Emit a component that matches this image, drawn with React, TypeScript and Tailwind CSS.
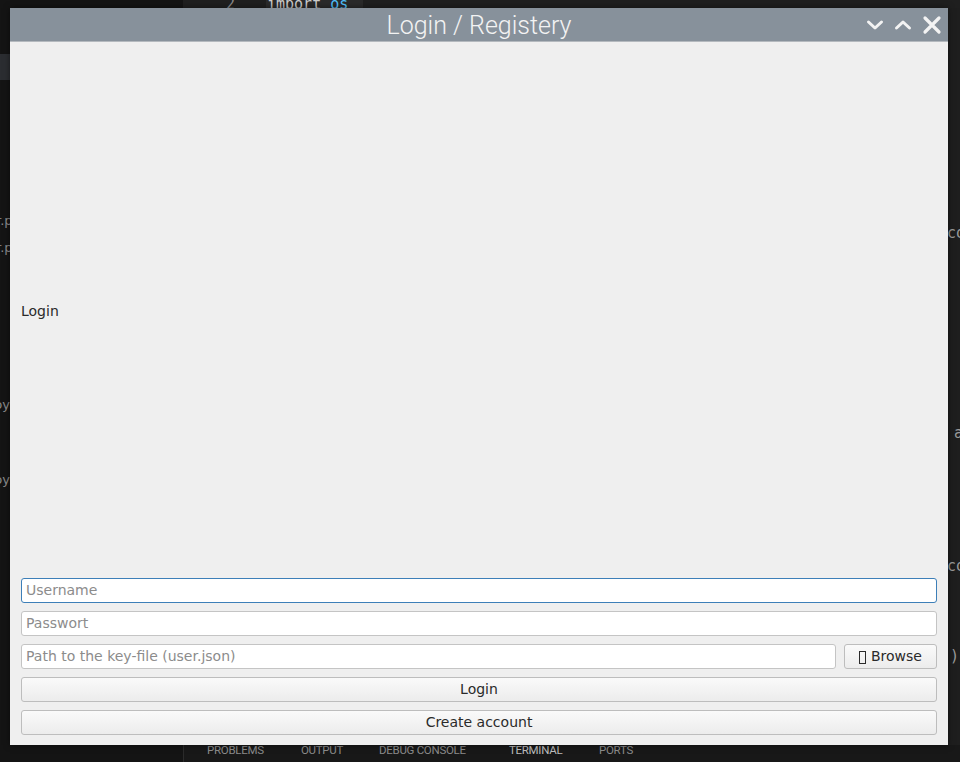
import React from "react";

const qt = { fontFamily: '"DejaVu Sans", "Liberation Sans", sans-serif' };
const mono = { fontFamily: '"DejaVu Sans Mono", "Liberation Mono", monospace' };

function Field({ placeholder, focused = false }: { placeholder: string; focused?: boolean }) {
  return (
    <div
      className={
        "h-[25px] flex items-center rounded-[3px] bg-white px-[4px] text-[14px] text-[#8c8c8c] border " +
        (focused ? "border-[#3d7fb8]" : "border-[#c4c4c4]")
      }
    >
      {placeholder}
    </div>
  );
}

function QButton({ children, className = "" }: { children: React.ReactNode; className?: string }) {
  return (
    <div
      className={
        "h-[25px] flex items-center justify-center rounded-[3px] border border-[#bdbdbd] bg-gradient-to-b from-[#fafafa] to-[#ececec] text-[14px] text-[#2a2a2a] " +
        className
      }
    >
      {children}
    </div>
  );
}

export default function App() {
  return (
    <div className="relative w-[960px] h-[762px] overflow-hidden bg-[#141414]" style={qt}>
      {/* background desktop (editor behind) */}
      <div className="absolute left-[183px] top-0 right-0 h-[8px] bg-[#1f1f1f]" />
      <div className="absolute left-[266px] top-0 w-[97px] h-[8px] bg-[#2a2a2a]" />
      <div className="absolute left-[226px] top-[-7px] text-[15px] text-[#8a8a8a]" style={mono}>2</div>
      <div className="absolute left-[267px] top-[-7px] text-[15px] text-[#cccccc] whitespace-pre" style={mono}>
        import <span className="text-[#4fc1ff]">os</span>
      </div>
      <div className="absolute left-0 top-[54px] w-[10px] h-[26px] bg-[#2b2d31]" />
      <div className="absolute left-[-4px] top-[211px] text-[13px] text-[#8a8a8a]">r.p</div>
      <div className="absolute left-[-4px] top-[238px] text-[13px] text-[#8a8a8a]">r.p</div>
      <div className="absolute left-[-6px] top-[395px] text-[13px] text-[#8a8a8a]">py</div>
      <div className="absolute left-[-6px] top-[470px] text-[13px] text-[#8a8a8a]">py</div>
      <div className="absolute left-[948px] top-[8px] w-[12px] h-[737px] bg-[#1e1e1e]" />
      <div className="absolute left-[947px] top-[222px] text-[15px] text-[#9a9a9a]" style={mono}>co</div>
      <div className="absolute left-[954px] top-[422px] text-[15px] text-[#9a9a9a]" style={mono}>a</div>
      <div className="absolute left-[947px] top-[555px] text-[15px] text-[#9a9a9a]" style={mono}>co</div>
      <div className="absolute left-[950px] top-[645px] text-[15px] text-[#9a9a9a]" style={mono}>)</div>
      <div className="absolute left-[183px] top-[745px] right-0 bottom-0 bg-[#181818] border-l border-[#2b2b2b]" />
      <div
        className="absolute left-[207px] top-[742px] flex text-[11.5px] tracking-tight text-[#8b8b8b]"
        style={{ fontFamily: "Roboto, sans-serif" }}
      >
        <span className="w-[94px]">PROBLEMS</span>
        <span className="w-[78px]">OUTPUT</span>
        <span className="w-[130px]">DEBUG CONSOLE</span>
        <span className="w-[90px] text-[#bdbdbd]">TERMINAL</span>
        <span>PORTS</span>
      </div>

      {/* dialog window */}
      <div className="absolute left-[10px] top-[8px] w-[938px] h-[737px] flex flex-col bg-[#efefef] shadow-[0_0_6px_rgba(0,0,0,0.5)]">
        <div className="relative h-[34px] shrink-0 bg-[#87919b] border-b border-[#b4b9be] flex items-center justify-center">
          <span
            className="text-[25px] font-light text-[#f3f3f3] leading-none mt-[2px]"
            style={{ fontFamily: "Roboto, sans-serif" }}
          >
            Login / Registery
          </span>
          <div className="absolute right-[6px] top-0 h-full flex items-center gap-[10px]">
            <svg width="18" height="18" viewBox="0 0 18 18">
              <path d="M2.5 6 L9 12 L15.5 6" fill="none" stroke="#f3f3f3" strokeWidth="3" strokeLinecap="round" strokeLinejoin="round" />
            </svg>
            <svg width="18" height="18" viewBox="0 0 18 18">
              <path d="M2.5 12 L9 6 L15.5 12" fill="none" stroke="#f3f3f3" strokeWidth="3" strokeLinecap="round" strokeLinejoin="round" />
            </svg>
            <svg width="20" height="20" viewBox="0 0 20 20">
              <path d="M3 3 L17 17 M17 3 L3 17" fill="none" stroke="#f3f3f3" strokeWidth="3.2" strokeLinecap="round" />
            </svg>
          </div>
        </div>

        <div className="flex-1 flex flex-col px-[11px] pt-[11px] pb-[10px]">
          <div className="flex-1 flex items-center text-[14px] text-[#2a2a2a]">Login</div>
          <div className="flex flex-col gap-[8px] mt-[8px]">
            <Field placeholder="Username" focused />
            <Field placeholder="Passwort" />
            <div className="flex gap-[8px]">
              <div className="flex-1">
                <Field placeholder="Path to the key-file (user.json)" />
              </div>
              <QButton className="w-[93px]">
                <span className="inline-block w-[7px] h-[13px] border border-[#2a2a2a] mr-[5px] mt-[2px]" />
                Browse
              </QButton>
            </div>
            <QButton>Login</QButton>
            <QButton>Create account</QButton>
          </div>
        </div>
      </div>
    </div>
  );
}
